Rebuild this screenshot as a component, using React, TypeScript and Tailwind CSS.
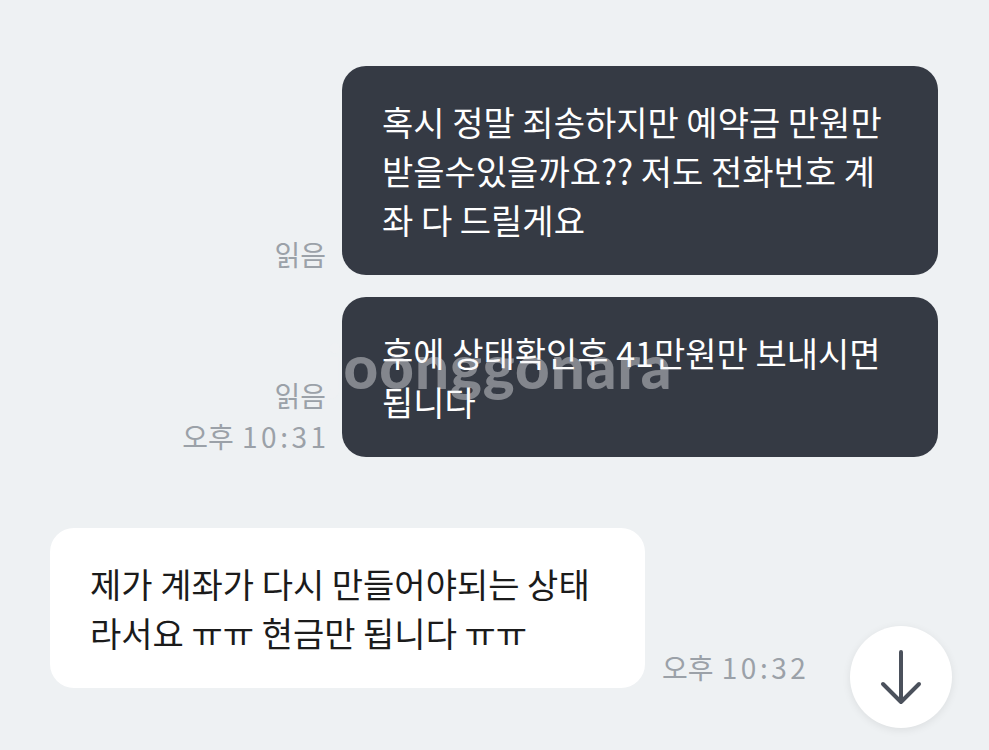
import React from "react";

const kr = { fontFamily: '"Noto Sans CJK KR", "Noto Sans", sans-serif' };

function Meta({ read, time }: { read?: boolean; time?: string }) {
	return (
		<div className="flex flex-col items-end text-[28px] leading-[41px] text-[#9ba1a8] whitespace-nowrap">
			{read && <span>읽음</span>}
			{time && (
				<span>
					오후 <span className="ml-[2px] mr-[-3.5px] tracking-[3.5px]">{time}</span>
				</span>
			)}
		</div>
	);
}

export default function App() {
	return (
		<div className="relative h-[750px] w-[989px] overflow-hidden bg-[#eef1f3]" style={kr}>
			<div className="flex flex-col pt-[66px]">
				{/* my messages */}
				<div className="flex items-end justify-end gap-4 pr-[51px]">
					<Meta read />
					<div className="w-[596px] rounded-[24px] bg-[#353a44] px-10 py-[31px] text-[34px] leading-[49px] text-white">
						혹시 정말 죄송하지만 예약금 만원만<br />
						받을수있을까요?? 저도 전화번호 계<br />
						좌 다 드릴게요
					</div>
				</div>
				<div className="mt-[22px] flex items-end justify-end gap-4 pr-[51px]">
					<Meta read time="10:31" />
					<div className="w-[596px] rounded-[24px] bg-[#353a44] px-10 py-[31px] text-[34px] leading-[49px] text-white">
						후에 상태확인후 41만원만 보내시면<br />
						됩니다
					</div>
				</div>

				{/* their message */}
				<div className="mt-[71px] flex items-end gap-[17px] pl-[50px]">
					<div className="w-[595px] rounded-[24px] bg-white px-10 py-[31px] text-[34px] leading-[49px] text-[#1b1b1b]">
						제가 계좌가 다시 만들어야되는 상태<br />
						라서요 ㅠㅠ 현금만 됩니다 ㅠㅠ
					</div>
					<Meta time="10:32" />
				</div>
			</div>

			{/* watermark */}
			<div
				className="pointer-events-none absolute left-[327px] top-[336px] text-[60px] font-black leading-none tracking-[1px] text-[rgba(240,241,243,0.42)]"
				style={{ fontFamily: "Lato, sans-serif" }}
			>
				joonggonara
			</div>

			{/* scroll to bottom */}
			<button className="absolute left-[850px] top-[626px] flex h-[102px] w-[102px] items-center justify-center rounded-full bg-white shadow-[0_2px_8px_rgba(0,0,0,0.08)]">
				<svg width="102" height="102" viewBox="0 0 102 102" fill="none" stroke="#4b515c" strokeWidth="4" strokeLinecap="round" strokeLinejoin="round">
					<path d="M51 26V76M33 58L51 76L69 58" />
				</svg>
			</button>
		</div>
	);
}
